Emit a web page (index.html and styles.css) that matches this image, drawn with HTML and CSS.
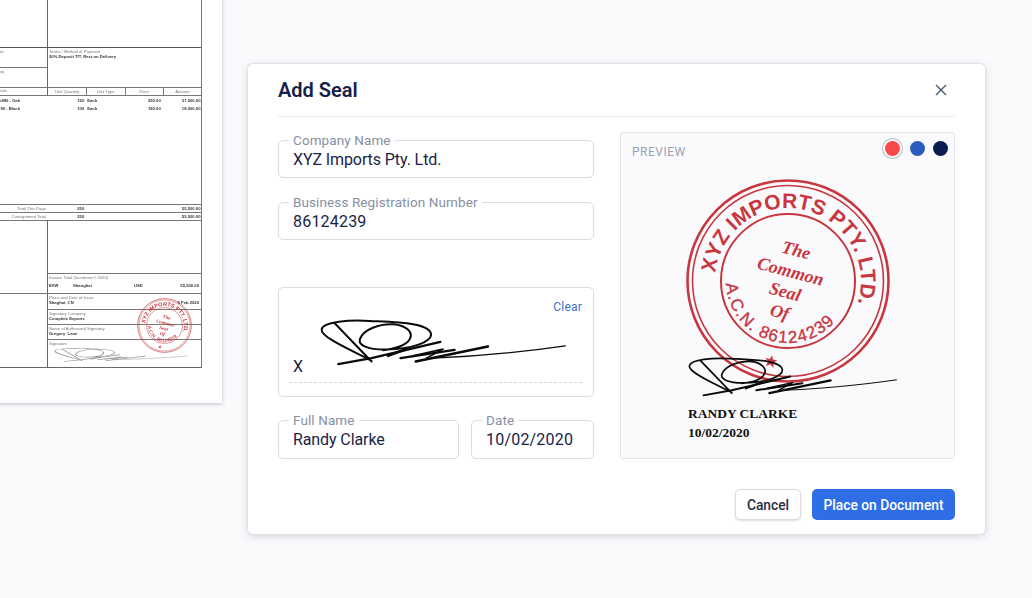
FILE: index.html
```html
<!DOCTYPE html>
<html lang="en">
<head>
<meta charset="utf-8">
<title>Add Seal</title>
<link rel="stylesheet" href="styles.css">
</head>
<body>
<svg class="defs" aria-hidden="true">
  <defs>
    <g id="signature" fill="none" stroke="currentColor" stroke-linecap="round" stroke-linejoin="round">
      <path stroke-width="6" d="M195 128 L305 242 M305 240 C260 215 150 170 155 145 C160 122 240 116 300 120 C380 124 480 125 484 160 C486 185 420 205 350 206 C290 207 265 192 270 175 C280 145 330 128 370 130 C410 133 432 155 420 175 C410 195 370 205 340 208"/>
      <path stroke-width="7" d="M205 250 L305 232 L512 183"/>
      <path stroke-width="8" d="M355 225 L412 204"/>
      <path stroke-width="7" d="M392 232 L555 207"/>
      <path stroke-width="8" d="M438 242 L655 197"/>
      <path stroke-width="5" d="M430 225 L520 205 L470 232"/>
      <path stroke-width="3.5" d="M490 232 C600 228 750 215 888 195"/>
    </g>
    <path id="seal-top" d="M-68.6 25 A73 73 0 1 1 68.6 25"/>
    <path id="seal-bottom" d="M-62 0 A62 62 0 1 0 62 0"/>
    <g id="seal" fill="none" stroke="#c8373f">
      <circle r="100.5" stroke-width="2.6"/>
      <circle r="95.5" stroke-width="1.6"/>
      <circle r="67" stroke-width="2"/>
      <g class="seal-text" transform="rotate(12)">
        <text class="seal-name"><textPath href="#seal-top" startOffset="50%" text-anchor="middle">XYZ IMPORTS PTY. LTD.</textPath></text>
        <text class="seal-acn" transform="rotate(7)"><textPath href="#seal-bottom" startOffset="50%" text-anchor="middle">A.C.N. 86124239</textPath></text>
        <g transform="rotate(3)">
          <text class="seal-mid" x="0" y="-26" text-anchor="middle">The</text>
          <text class="seal-mid" x="0" y="-4" text-anchor="middle">Common</text>
          <text class="seal-mid" x="0" y="17" text-anchor="middle">Seal</text>
          <text class="seal-mid" x="0" y="38" text-anchor="middle">Of</text>
        </g>
        <path class="seal-star" d="M0 76 L1.6 80 L6 80 L2.6 83 L4 88 L0 85.2 L-4 88 L-2.6 83 L-6 80 L-1.6 80 Z"/>
      </g>
    </g>
  </defs>
</svg>

<main class="desktop">
  <section class="sheet">
    <div class="doc">
      <div class="doc-row h-top">
        <div class="doc-left"></div>
        <div class="doc-right"></div>
      </div>
      <div class="doc-row h-terms line-strong">
        <div class="doc-left split">
          <div class="doc-sub"><span class="doc-label">Port</span></div>
          <div class="doc-sub line"><span class="doc-label">Ship</span></div>
        </div>
        <div class="doc-right pad">
          <div class="doc-label">Terms / Method of Payment</div>
          <div class="doc-value">30% Deposit T/T, Rest on Delivery</div>
        </div>
      </div>
      <div class="doc-row h-head line">
        <div class="doc-left head-goods doc-label">Goods</div>
        <div class="doc-cols">
          <span class="doc-label col-head">Unit Quantity</span>
          <span class="doc-label col-head">Unit Type</span>
          <span class="doc-label col-head">Price</span>
          <span class="doc-label col-head">Amount</span>
        </div>
      </div>
      <div class="doc-items line">
        <div class="doc-row h-item">
          <div class="doc-left item-name doc-value">x890 - Oak</div>
          <div class="doc-cols plain">
            <span class="doc-value num">150</span><span class="doc-value unit">Each</span><span class="doc-value num">250.00</span><span class="doc-value num">37,500.00</span>
          </div>
        </div>
        <div class="doc-row h-item">
          <div class="doc-left item-name doc-value">x790 : Black</div>
          <div class="doc-cols plain">
            <span class="doc-value num">100</span><span class="doc-value unit">Each</span><span class="doc-value num">180.00</span><span class="doc-value num">18,000.00</span>
          </div>
        </div>
      </div>
      <div class="doc-row h-total line">
        <div class="doc-left total-label doc-label">Total This Page</div>
        <div class="doc-cols plain">
          <span class="doc-value num">250</span><span></span><span></span><span class="doc-value num">55,500.00</span>
        </div>
      </div>
      <div class="doc-row h-total line">
        <div class="doc-left total-label doc-label">Consignment Total</div>
        <div class="doc-cols plain">
          <span class="doc-value num">250</span><span></span><span></span><span class="doc-value num">55,500.00</span>
        </div>
      </div>
      <div class="doc-row h-invoice line">
        <div class="doc-left"></div>
        <div class="doc-right invoice-col">
          <div class="invoice line pad">
            <div class="doc-label">Invoice Total (Incoterms® 2020)</div>
            <div class="invoice-values">
              <span class="doc-value">EXW</span>
              <span class="doc-value">Shanghai</span>
              <span class="doc-value">USD</span>
              <span class="doc-value">55,500.00</span>
            </div>
          </div>
        </div>
      </div>
      <div class="doc-row h-sign line">
        <div class="doc-left"></div>
        <div class="doc-right sign-col">
          <div class="sign-cell c-15 pad">
            <div class="doc-label">Place and Date of Issue</div>
            <div class="issue-values"><span class="doc-value">Shaghai, CN</span><span class="doc-value">9 Feb 2020</span></div>
          </div>
          <div class="sign-cell c-15 pad line">
            <div class="doc-label">Signatory Company</div>
            <div class="doc-value">Complete Exports</div>
          </div>
          <div class="sign-cell c-15 pad line">
            <div class="doc-label">Name of Authorized Signatory</div>
            <div class="doc-value">Gregory &nbsp;Lane</div>
          </div>
          <div class="sign-cell c-last pad line">
            <div class="doc-label">Signature</div>
            <svg class="doc-sig" viewBox="150 115 740 140" preserveAspectRatio="none"><use href="#signature"/></svg>
          </div>
          <svg class="doc-seal" viewBox="-103 -103 206 206"><use href="#seal"/></svg>
        </div>
      </div>
    </div>
  </section>

  <section class="modal">
    <header class="modal-head">
      <h1 class="modal-title">Add Seal</h1>
      <svg class="close" viewBox="0 0 12 12"><path d="M1 1 L11 11 M11 1 L1 11"/></svg>
    </header>
    <div class="modal-body">
      <form class="form">
        <div class="field">
          <span class="field-label">Company Name</span>
          <span class="field-value">XYZ Imports Pty. Ltd.</span>
        </div>
        <div class="field">
          <span class="field-label">Business Registration Number</span>
          <span class="field-value digits">86124239</span>
        </div>
        <div class="signbox">
          <div class="signbox-top"><span class="clear">Clear</span></div>
          <div class="signbox-row">
            <span class="signbox-x">X</span>
            <svg class="signbox-sig" viewBox="150 115 740 140"><use href="#signature"/></svg>
          </div>
          <div class="signbox-line"></div>
        </div>
        <div class="field-pair">
          <div class="field wide">
            <span class="field-label">Full Name</span>
            <span class="field-value">Randy Clarke</span>
          </div>
          <div class="field narrow">
            <span class="field-label">Date</span>
            <span class="field-value digits">10/02/2020</span>
          </div>
        </div>
      </form>
      <aside class="preview">
        <div class="preview-head">
          <span class="preview-title">PREVIEW</span>
          <div class="swatches">
            <span class="swatch red"></span>
            <span class="swatch blue"></span>
            <span class="swatch navy"></span>
          </div>
        </div>
        <div class="stage">
          <svg class="stage-seal" viewBox="-103 -103 206 206"><use href="#seal"/></svg>
          <svg class="stage-sig" viewBox="150 115 740 140"><use href="#signature"/></svg>
          <div class="stage-name">RANDY CLARKE</div>
          <div class="stage-date">10/02/2020</div>
        </div>
      </aside>
    </div>
    <footer class="modal-foot">
      <button class="btn btn-cancel" type="button">Cancel</button>
      <button class="btn btn-primary" type="button">Place on Document</button>
    </footer>
  </section>
</main>
</body>
</html>
```

FILE: styles.css
```css
* { box-sizing: border-box; }

html, body { margin: 0; padding: 0; }

body {
  background: #f9fafc;
  font-family: Roboto, "Liberation Sans", sans-serif;
  color: #1a2347;
}

.defs { position: absolute; width: 0; height: 0; }

.desktop {
  position: relative;
  width: 1032px;
  height: 598px;
  overflow: hidden;
}

/* Background document sheet */
.sheet {
  position: absolute;
  left: -180px;
  top: -20px;
  width: 402px;
  height: 423px;
  padding: 0 20px 0 0;
  background: #fff;
  box-shadow: 0 1px 4px rgba(60, 70, 90, 0.32);
}

.doc {
  filter: blur(0.35px);
  border-right: 1.5px solid #777;
  border-bottom: 1px solid #666;
  font-family: "Liberation Sans", sans-serif;
  font-size: 4.2px;
  line-height: 5px;
  color: #333;
}

.doc-row { display: flex; }
.line { border-top: 1px solid #777; }
.line-strong { border-top: 1.5px solid #555; }
.h-top { height: 67px; }
.h-terms { height: 40px; }
.h-head { height: 8px; }
.h-item { height: 8px; align-items: center; }
.h-total { height: 8px; align-items: center; }
.h-invoice { height: 73px; }
.h-sign { height: 74px; }
.doc-items { height: 109px; padding-top: 0; }

.doc-left {
  flex: 0 0 228px;
  border-right: 1px solid #666;
}
.doc-right { flex: 1; min-width: 0; }
.pad { padding: 1px 1px 0 1px; }
.doc-label { color: #777; }
.doc-value { color: #333; font-weight: 700; }

.split { display: flex; flex-direction: column; }
.doc-sub { flex: 1; padding: 1px 0 0 176px; }

.head-goods { text-align: right; padding-right: 40px; }
.doc-cols {
  flex: 1;
  display: grid;
  grid-template-columns: repeat(4, 1fr);
}
.col-head {
  text-align: center;
  border-left: 1px solid #777;
  line-height: 7px;
}
.col-head:first-child { border-left: 0; }
.plain { column-gap: 0; }
.num { text-align: right; padding-right: 2px; }
.num:last-child { padding-right: 0.5px; }
.unit { padding-left: 1px; }
.item-name { border-right: 0; text-align: right; padding-right: 28px; }
.total-label { border-right: 0; text-align: right; padding-right: 2px; }

.invoice-col { display: flex; flex-direction: column; justify-content: flex-end; }
.invoice { height: 20px; }
.invoice-values {
  display: grid;
  grid-template-columns: 24px 61px 30px 1fr;
  margin-top: 3px;
}
.invoice-values span:last-child { text-align: right; padding-right: 1px; }

.sign-col { position: relative; display: flex; flex-direction: column; }
.c-15 { height: 15px; }
.c-last { flex: 1; }
.issue-values { display: flex; justify-content: space-between; padding-right: 1px; }
.doc-sig {
  display: block;
  width: 134px;
  height: 14px;
  margin: 2px 0 0 5px;
  color: #9a9a9a;
  overflow: visible;
}
.doc-seal {
  position: absolute;
  left: 89px;
  top: 4px;
  width: 55px;
  height: 55px;
}

/* Modal */
.modal {
  position: absolute;
  left: 248px;
  top: 64px;
  width: 737px;
  height: 470px;
  padding: 0 30px;
  background: #fff;
  border-radius: 5px;
  box-shadow: 0 0 0 1px #e0e2e7, 0 2px 8px rgba(60, 70, 90, 0.22);
}

.modal-head {
  display: flex;
  align-items: center;
  justify-content: space-between;
  height: 53px;
  padding: 0 8px 1px 0;
  border-bottom: 1px solid #e9ebef;
}

.modal-title {
  margin: 0;
  font-size: 20px;
  font-weight: 600;
  line-height: 52px;
  color: #14204a;
}

.close {
  width: 12px;
  height: 12px;
  fill: none;
  stroke: #4d5670;
  stroke-width: 1.4;
}

.modal-body {
  display: grid;
  grid-template-columns: 316px 335px;
  column-gap: 26px;
  padding-top: 15px;
}

.form { display: flex; flex-direction: column; padding-top: 8px; }

.field {
  position: relative;
  display: flex;
  align-items: center;
  height: 38px;
  margin-bottom: 24px;
  padding: 0 14px;
  border: 1px solid #d9dce3;
  border-radius: 5px;
}

.field-label {
  position: absolute;
  left: 10px;
  top: -8px;
  padding: 0 4px;
  background: #fff;
  font-size: 13.5px;
  line-height: 15px;
  letter-spacing: 0.1px;
  color: #868fa3;
}

.field-value {
  font-size: 16px;
  letter-spacing: -0.1px;
  color: #1a2347;
}
.field-value.digits { letter-spacing: 0.2px; }

.signbox {
  display: flex;
  flex-direction: column;
  height: 110px;
  margin-top: 23px;
  padding: 12px 11px 0 10px;
  border: 1px solid #d9dce3;
  border-radius: 5px;
}

.signbox-top { display: flex; justify-content: flex-end; height: 14px; }
.clear { font-size: 12px; line-height: 14px; letter-spacing: 0.2px; color: #3b72c4; }

.signbox-row {
  display: flex;
  align-items: flex-end;
  height: 56px;
  margin-top: 5px;
}
.signbox-x { width: 31px; padding-left: 4px; font-size: 16px; line-height: 17px; color: #1a2347; }
.signbox-sig {
  align-self: flex-start;
  width: 246px;
  height: 47px;
  color: #0a0a0a;
  overflow: visible;
}
.signbox-line { margin-top: 7px; border-top: 1px dashed #d4d7dd; }

.field-pair { display: flex; gap: 12px; margin-top: 23px; }
.field-pair .field { height: 39px; margin-bottom: 0; }
.wide { flex: 0 0 181px; }
.narrow { flex: 1; }

/* Preview */
.preview {
  height: 327px;
  background: #fafafd;
  border: 1px solid #e2e4ea;
  border-radius: 3px;
}

.preview-head {
  display: flex;
  justify-content: space-between;
  height: 45px;
  padding: 11px 6px 0 11px;
}

.preview-title {
  margin-top: 1px;
  font-size: 12px;
  line-height: 14px;
  letter-spacing: 0.5px;
  color: #9aa2b2;
}

.swatches { display: flex; align-items: flex-start; gap: 8px; }
.swatch { display: block; width: 15px; height: 15px; border-radius: 50%; margin-top: -3px; }
.swatch.red {
  width: 15px;
  margin-right: 2px;
  background: #f84a4a;
  box-shadow: 0 0 0 2px #fafafd, 0 0 0 3px #b9bcc4;
}
.swatch.blue { background: #2a5dbd; }
.swatch.navy { background: #0b1d50; }

.stage { display: flex; flex-direction: column; padding-left: 64px; }
.stage-seal { display: block; width: 206px; height: 206px; }
.stage-sig {
  display: block;
  width: 209px;
  height: 40px;
  margin: -27px 0 0 3px;
  color: #0a0a0a;
  overflow: visible;
}
.stage-name, .stage-date {
  padding-left: 3px;
  font-family: "Liberation Serif", serif;
  font-weight: 700;
  font-size: 13.5px;
  line-height: 19px;
  color: #111;
}
.stage-name { margin-top: 7px; }

/* Seal text */
.seal-text text { stroke: none; fill: #c8373f; font-family: "Liberation Sans", sans-serif; font-weight: 700; }
.seal-name { font-size: 21px; }
.seal-acn { font-size: 17px; letter-spacing: 1.2px; }
.seal-text .seal-acn { font-weight: 400; stroke: #c8373f; stroke-width: 0.35; }
.seal-text .seal-mid { font-family: "Liberation Serif", serif; font-style: italic; font-size: 18px; }
.seal-star { fill: #c8373f; stroke: none; }

/* Footer */
.modal-foot {
  display: flex;
  justify-content: flex-end;
  gap: 11px;
  margin-top: 30px;
}

.btn {
  height: 31px;
  padding: 0;
  border-radius: 5px;
  font-family: inherit;
  font-size: 13.8px;
  font-weight: 500;
}

.btn-cancel {
  width: 66px;
  background: #fff;
  border: 1px solid #d9dce3;
  box-shadow: 0 1px 2px rgba(40, 50, 80, 0.15);
  color: #262d44;
}

.btn-primary {
  width: 143px;
  background: #2f6ee6;
  border: 0;
  color: #fff;
}
```
